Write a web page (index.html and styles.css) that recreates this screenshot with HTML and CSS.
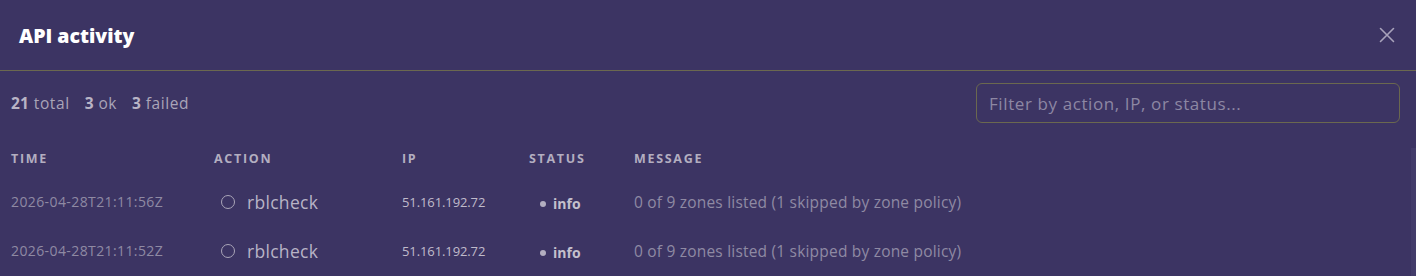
FILE: index.html
```html
<!DOCTYPE html>
<html>
<head>
<meta charset="utf-8">
<link rel="stylesheet" href="styles.css">
</head>
<body>
<div class="modal">
  <header class="head">
    <h1 class="title">API activity</h1>
    <button class="close" aria-label="Close">
      <svg width="16" height="16" viewBox="0 0 16 16"><path d="M1.5 1.5 L14.5 14.5 M14.5 1.5 L1.5 14.5" stroke="#a8a2bb" stroke-width="1.6" fill="none" stroke-linecap="round"/></svg>
    </button>
  </header>
  <div class="toolbar">
    <div class="stats">
      <span><b>21</b> total</span>
      <span><b>3</b> ok</span>
      <span><b>3</b> failed</span>
    </div>
    <input class="filter" type="text" placeholder="Filter by action, IP, or status...">
  </div>
  <div class="scroller">
    <div class="table">
      <div class="row hrow">
        <div class="th">Time</div>
        <div class="th">Action</div>
        <div class="th">IP</div>
        <div class="th">Status</div>
        <div class="th">Message</div>
      </div>
      <div class="row">
        <div class="time">2026-04-28T21:11:56Z</div>
        <div class="action"><span class="ring"></span>rblcheck</div>
        <div class="ip">51.161.192.72</div>
        <div class="status"><span class="dot"></span>info</div>
        <div class="msg">0 of 9 zones listed (1 skipped by zone policy)</div>
      </div>
      <div class="row">
        <div class="time">2026-04-28T21:11:52Z</div>
        <div class="action"><span class="ring"></span>rblcheck</div>
        <div class="ip">51.161.192.72</div>
        <div class="status"><span class="dot"></span>info</div>
        <div class="msg">0 of 9 zones listed (1 skipped by zone policy)</div>
      </div>
    </div>
    <div class="scrollbar"></div>
  </div>
</div>
</body>
</html>
```
FILE: styles.css
```css
* { box-sizing: border-box; }
html, body { margin: 0; padding: 0; }
body {
  background: #3c3463;
  font-family: "Open Sans", "Noto Sans", sans-serif;
  width: 1416px;
  height: 276px;
  overflow: hidden;
}
.modal { display: flex; flex-direction: column; }
.head {
  height: 71px;
  display: flex;
  align-items: center;
  justify-content: space-between;
  padding: 0 21px 0 19px;
  border-bottom: 1px solid #6b684f;
}
.title {
  margin: 0;
  color: #ffffff;
  font-size: 19.5px;
  font-weight: 800;
  letter-spacing: 0px;
}
.close {
  background: none;
  border: 0;
  padding: 0;
  width: 16px;
  height: 16px;
  display: flex;
}
.toolbar {
  display: flex;
  align-items: center;
  justify-content: space-between;
  padding: 12px 16px 0 11px;
}
.stats {
  display: flex;
  gap: 15px;
  color: #aaa5b8;
  font-size: 15.5px;
  letter-spacing: 0.6px;
}
.stats b { font-weight: 700; color: #b9b4c6; letter-spacing: 0.2px; }
.filter {
  width: 424px;
  height: 40px;
  border: 1px solid #6b684f;
  border-radius: 6px;
  background: transparent;
  padding: 0 12px;
  font-family: inherit;
  font-size: 17px;
  letter-spacing: 0.6px;
  color: #ddd;
  outline: none;
}
.filter::placeholder { color: #8d87a3; }
.scroller {
  position: relative;
  margin-top: 20px;
}
.scrollbar {
  position: absolute;
  right: 0;
  top: 5px;
  width: 5px;
  height: 200px;
  background: #433c6a;
}
.table { padding-left: 11px; }
.row {
  display: grid;
  grid-template-columns: 203px 188px 127px 105px 1fr;
  align-items: center;
  height: 49px;
}
.hrow { height: 30px; margin-bottom: 4px; }
.th {
  color: #b3aec0;
  font-size: 12.5px;
  font-weight: 700;
  text-transform: uppercase;
  letter-spacing: 1.7px;
}
.time { color: #8f8aa3; font-size: 14px; letter-spacing: 0.4px; }
.action {
  display: flex;
  align-items: center;
  gap: 12px;
  padding-left: 7px;
  color: #b8b3c6;
  font-size: 17.5px;
  letter-spacing: 0.3px;
}
.ring {
  width: 14px;
  height: 14px;
  border: 1.5px solid #aaa5b8;
  border-radius: 50%;
}
.ip { color: #c0bbcb; font-size: 13px; letter-spacing: -0.1px; }
.status {
  display: flex;
  align-items: center;
  gap: 7px;
  padding-left: 11px;
  padding-top: 4px;
  color: #c4c0cd;
  font-size: 14px;
  font-weight: 700;
}
.dot {
  width: 6px;
  height: 6px;
  border-radius: 50%;
  background: #b3aec0;
}
.msg { color: #8f8aa3; font-size: 15.5px; letter-spacing: 0.2px; }
```
